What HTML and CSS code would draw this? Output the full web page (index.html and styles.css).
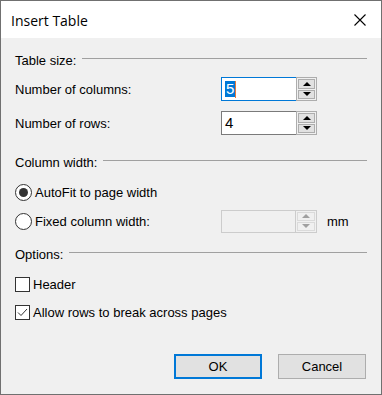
FILE: index.html
```html
<!DOCTYPE html>
<html lang="en">
<head>
  <meta charset="UTF-8" />
  <title>Insert Table</title>
  <link rel="stylesheet" href="styles.css">
</head>
<body>
  <div class="dialog">
    <!-- Title bar -->
    <div class="titlebar">
      <span class="title">Insert Table</span>
      <svg class="close" width="12" height="12" viewBox="0 0 12 12">
        <path d="M0.5 0.5 L11.5 11.5 M11.5 0.5 L0.5 11.5" stroke="#000" stroke-width="1.1" fill="none"/>
      </svg>
    </div>

    <div class="content">
      <div class="group-title"><span>Table size:</span><i></i></div>
      <div class="row row-cols">
        <label>Number of columns:</label>
        <div class="spin focused">
          <div class="spin-field"><span class="sel">5</span><span class="caret"></span></div>
          <div class="spin-btns">
            <div class="sbtn"><b class="up"></b></div>
            <div class="sbtn"><b class="down"></b></div>
          </div>
        </div>
      </div>
      <div class="row row-rows">
        <label>Number of rows:</label>
        <div class="spin">
          <div class="spin-field">4</div>
          <div class="spin-btns">
            <div class="sbtn"><b class="up"></b></div>
            <div class="sbtn"><b class="down"></b></div>
          </div>
        </div>
      </div>

      <div class="group-title gt-width"><span>Column width:</span><i></i></div>
      <div class="row row-radio">
        <span class="radio checked"></span><label>AutoFit to page width</label>
      </div>
      <div class="row row-radio2">
        <span class="radio"></span><label>Fixed column width:</label>
        <div class="spin disabled">
          <div class="spin-field"></div>
          <div class="spin-btns">
            <div class="sbtn"><b class="up"></b></div>
            <div class="sbtn"><b class="down"></b></div>
          </div>
        </div>
        <span class="unit">mm</span>
      </div>

      <div class="group-title gt-options"><span>Options:</span><i></i></div>
      <div class="row row-check">
        <span class="check"></span><label>Header</label>
      </div>
      <div class="row row-check2">
        <span class="check">
          <svg width="13" height="13" viewBox="0 0 13 13"><path d="M2 6.5 L5 9.5 L11 3" stroke="#333" stroke-width="1" fill="none"/></svg>
        </span><label>Allow rows to break across pages</label>
      </div>

      <div class="buttons">
        <button class="btn default">OK</button>
        <button class="btn">Cancel</button>
      </div>
    </div>
  </div>
</body>
</html>
```

FILE: styles.css
```css
* {
  box-sizing: border-box;
  margin: 0;
  padding: 0;
}

body {
  font-family: 'Liberation Sans', Arial, sans-serif;
  font-size: 13px;
  color: #000;
  background: #fff;
  width: 382px;
  height: 395px;
  overflow: hidden;
}

.dialog {
  width: 382px;
  height: 395px;
  border: 1px solid #707070;
  display: flex;
  flex-direction: column;
}

/* Title bar */
.titlebar {
  height: 37px;
  background: #fff;
  display: flex;
  align-items: center;
  justify-content: space-between;
  padding: 0 15px 0 10px;
}

.title {
  font-family: 'Open Sans', 'Liberation Sans', sans-serif;
  font-size: 14px;
  color: #000;
  margin-top: 1px;
}

.close {
  display: block;
}

/* Body */
.content {
  flex: 1;
  background: #f0f0f0;
  padding: 14px 14px 0 14px;
  display: flex;
  flex-direction: column;
}

.group-title {
  display: flex;
  align-items: center;
  height: 16px;
}

.group-title span {
  white-space: nowrap;
  margin-right: 6px;
}

.group-title i {
  flex: 1;
  height: 1px;
  background: #a0a0a0;
  margin-top: -3px;
}

.gt-width { margin-top: 19px; }
.gt-options { margin-top: 13px; }

.row {
  display: flex;
  align-items: center;
  height: 24px;
}

.row label {
  white-space: nowrap;
}

.row-cols { margin-top: 9px; }
.row-rows { margin-top: 10px; }

.row-cols label,
.row-rows label {
  width: 206px;
}

/* Spin box */
.spin {
  display: flex;
  height: 24px;
}

.spin-field {
  width: 75px;
  height: 24px;
  border: 1px solid #7a7a7a;
  border-right: none;
  background: #fff;
  padding: 3px 0 0 3px;
  font-size: 15px;
  line-height: 16px;
  display: flex;
  align-items: flex-start;
}

.spin.focused .spin-field {
  border-color: #0078d7;
}

.sel {
  background: #0078d7;
  color: #fff;
  padding: 0 1px;
}

.caret {
  width: 1px;
  height: 17px;
  background: #e87a3a;
}

.spin-btns {
  width: 21px;
  height: 24px;
  border: 1px solid #adadad;
  background: #f0f0f0;
  padding: 1px;
  display: flex;
  flex-direction: column;
  gap: 1px;
}

.sbtn {
  flex: 1;
  background: #e1e1e1;
  border: 1px solid #adadad;
  display: flex;
  align-items: center;
  justify-content: center;
}

.sbtn b {
  width: 0;
  height: 0;
  border-left: 4px solid transparent;
  border-right: 4px solid transparent;
}

.sbtn b.up { border-bottom: 4px solid #000; }
.sbtn b.down { border-top: 4px solid #000; }

.spin.disabled { height: 23px; }

.spin.disabled .spin-field {
  width: 74px;
  height: 23px;
  border-color: #cccccc;
  background: #f0f0f0;
}

.spin.disabled .spin-btns {
  width: 22px;
  height: 23px;
  border-color: #cccccc;
}

.spin.disabled .sbtn {
  background: #f0f0f0;
  border-color: #dadada;
}

.spin.disabled .sbtn b.up { border-bottom-color: #a0a0a0; }
.spin.disabled .sbtn b.down { border-top-color: #a0a0a0; }

/* Radio buttons */
.row-radio { margin-top: 10px; }
.row-radio2 { margin-top: 5px; }

.radio {
  width: 17px;
  height: 17px;
  border: 1px solid #333;
  border-radius: 50%;
  background: #fff;
  margin-right: 3px;
  display: flex;
  align-items: center;
  justify-content: center;
}

.radio.checked::after {
  content: '';
  width: 9px;
  height: 9px;
  border-radius: 50%;
  background: #333;
}

.row-radio2 label {
  width: 186px;
}

.unit {
  margin-left: 10px;
}

/* Checkboxes */
.row-check { margin-top: 10px; }
.row-check2 { margin-top: 4px; }

.check {
  width: 15px;
  height: 15px;
  border: 1px solid #333;
  background: #fff;
  margin-right: 3px;
  display: flex;
  align-items: center;
  justify-content: center;
}

.check svg { display: block; }

/* Buttons */
.buttons {
  display: flex;
  justify-content: flex-end;
  gap: 16px;
  margin-top: 30px;
  padding-right: 1px;
}

.btn {
  width: 88px;
  height: 25px;
  font-family: 'Liberation Sans', Arial, sans-serif;
  font-size: 13px;
  color: #000;
  background: #e1e1e1;
  border: 1px solid #adadad;
}

.btn.default {
  border: 2px solid #0078d7;
}
```
